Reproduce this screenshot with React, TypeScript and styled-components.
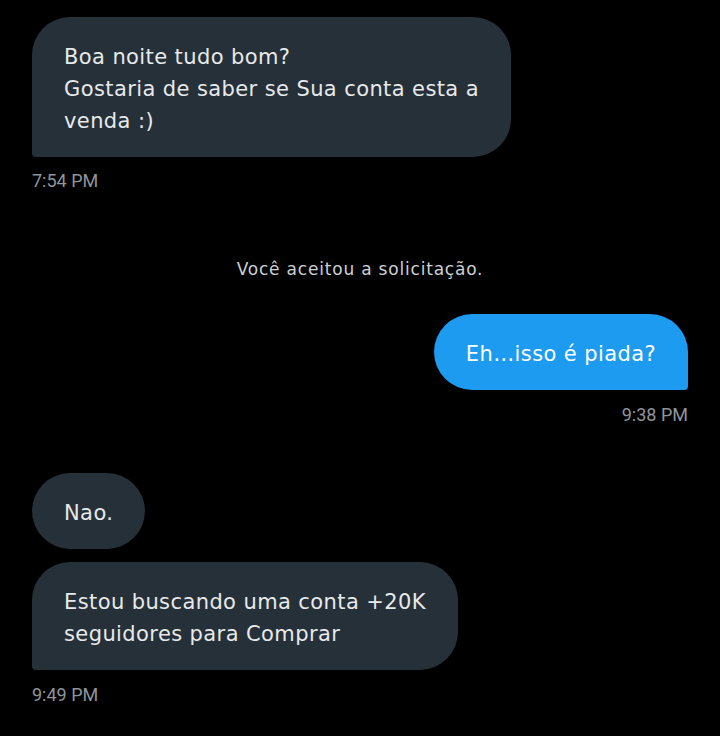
import React from "react";
import styled, { createGlobalStyle, css } from "styled-components";

const Global = createGlobalStyle`
  html, body { margin: 0; padding: 0; background: #000; }
  body { width: 720px; height: 736px; overflow: hidden; }
`;

const Screen = styled.div`
  width: 720px;
  height: 736px;
  background: #000;
  box-sizing: border-box;
  padding: 17px 32px 0;
  display: flex;
  flex-direction: column;
  font-family: Roboto, "Liberation Sans", sans-serif;
`;

type Side = "in" | "out";

const Bubble = styled.div<{ $side: Side; $corner: "bl" | "br" | "none"; $mt?: number }>`
  align-self: ${(p) => (p.$side === "in" ? "flex-start" : "flex-end")};
  margin-top: ${(p) => p.$mt ?? 0}px;
  background: ${(p) => (p.$side === "in" ? "#263039" : "#1d9bf0")};
  color: ${(p) => (p.$side === "in" ? "#e7e9ea" : "#ffffff")};
  font-family: "DejaVu Sans", sans-serif;
  font-size: 21px;
  letter-spacing: 0.4px;
  line-height: 32px;
  padding: 24px 32px 20px;
  border-radius: 38px;
  white-space: pre-line;
  ${(p) =>
    p.$corner === "bl" &&
    css`
      border-bottom-left-radius: 4px;
    `}
  ${(p) =>
    p.$corner === "br" &&
    css`
      border-bottom-right-radius: 4px;
    `}
`;

const Time = styled.div<{ $side: Side; $mt: number }>`
  align-self: ${(p) => (p.$side === "in" ? "flex-start" : "flex-end")};
  margin-top: ${(p) => p.$mt}px;
  color: #8f959b;
  font-size: 18px;
  line-height: 22px;
`;

const System = styled.div<{ $mt: number }>`
  align-self: center;
  margin-top: ${(p) => p.$mt}px;
  color: #cdd0d3;
  font-family: "DejaVu Sans", sans-serif;
  font-size: 17px;
  letter-spacing: 0.8px;
  line-height: 22px;
`;

export default function App() {
  return (
    <>
      <Global />
      <Screen>
        <Bubble $side="in" $corner="bl">
          {"Boa noite tudo bom?\nGostaria de saber se Sua conta esta a\nvenda :)"}
        </Bubble>
        <Time $side="in" $mt={13}>7:54 PM</Time>
        <System $mt={66}>Você aceitou a solicitação.</System>
        <Bubble $side="out" $corner="br" $mt={34}>
          Eh…isso é piada?
        </Bubble>
        <Time $side="out" $mt={14}>9:38 PM</Time>
        <Bubble $side="in" $corner="none" $mt={47}>
          Nao.
        </Bubble>
        <Bubble $side="in" $corner="bl" $mt={13}>
          {"Estou buscando uma conta +20K\nseguidores para Comprar"}
        </Bubble>
        <Time $side="in" $mt={14}>9:49 PM</Time>
      </Screen>
    </>
  );
}
